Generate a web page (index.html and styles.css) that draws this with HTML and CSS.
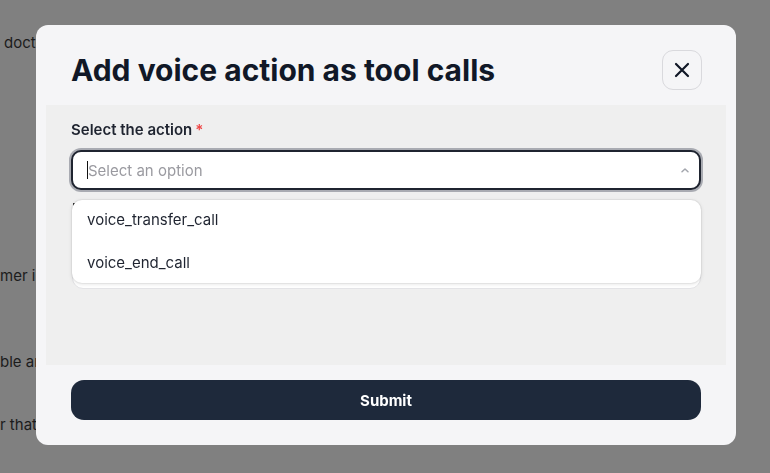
FILE: index.html
```html
<!DOCTYPE html>
<html>
<head>
<meta charset="utf-8">
<link rel="stylesheet" href="styles.css">
</head>
<body>
<div class="page">
  <p class="bg-line l1">doctor appointment</p>
  <p class="bg-line l2 cut">mer information</p>
  <p class="bg-line l3 cut">ble and more</p>
  <p class="bg-line l4 cut">r that is</p>
</div>
<div class="overlay">
  <div class="modal">
    <div class="modal-header">
      <h2 class="modal-title">Add voice action as tool calls</h2>
      <button class="close-btn" aria-label="Close">
        <svg width="20" height="20" viewBox="0 0 20 20"><path d="M4 4 L16 16 M16 4 L4 16" stroke="#111827" stroke-width="2.2" stroke-linecap="round"/></svg>
      </button>
    </div>
    <div class="modal-body">
      <label class="field-label">Select the action<span class="req">*</span></label>
      <div class="select-wrap">
        <div class="select">
          <span class="caret"></span><span class="placeholder">Select an option</span>
          <svg class="chev" width="10" height="6" viewBox="0 0 10 6"><path d="M2 4.8 L5 2 L8 4.8" fill="none" stroke="#a3a6ad" stroke-width="1.5" stroke-linecap="round" stroke-linejoin="round"/></svg>
        </div>
        <div class="next-field"><span class="next-mark"></span></div>
        <ul class="dropdown">
          <li class="option">voice_transfer_call</li>
          <li class="option">voice_end_call</li>
        </ul>
      </div>
    </div>
    <div class="modal-footer">
      <button class="submit-btn">Submit</button>
    </div>
  </div>
</div>
</body>
</html>
```

FILE: styles.css
```css
* { box-sizing: border-box; }
html, body { margin: 0; padding: 0; }
body {
  width: 770px;
  height: 473px;
  overflow: hidden;
  background: #808080;
  font-family: Inter, "Noto Sans", sans-serif;
}
.page {
  padding: 0 0 0 4px;
  color: #1c1c1c;
  font-size: 15px;
}
.bg-line { margin: 0; line-height: 20px; white-space: nowrap; }
.cut { margin-left: -4px; }
.l1 { padding-top: 33px; }
.l2 { margin-top: 213px; }
.l3 { margin-top: 66px; }
.l4 { margin-top: 43px; }
.overlay {
  position: fixed;
  inset: 0;
}
.modal {
  position: absolute;
  left: 36px;
  top: 25px;
  width: 700px;
  height: 420px;
  background: #f5f5f7;
  border-radius: 12px;
  display: flex;
  flex-direction: column;
}
.modal-header {
  height: 80px;
  padding: 25px 34px 15px 35px;
  display: flex;
  align-items: center;
  justify-content: space-between;
}
.modal-title {
  margin: 0;
  font-size: 30px;
  font-weight: 700;
  color: #111827;
}
.close-btn {
  width: 40px;
  height: 40px;
  border: 1px solid #d9d9dd;
  border-radius: 11px;
  background: #f5f5f7;
  display: flex;
  align-items: center;
  justify-content: center;
  padding: 0;
}
.modal-body {
  margin: 0 10px;
  height: 260px;
  background: #efefef;
  padding: 15px 25px 0 25px;
}
.field-label {
  display: block;
  font-size: 15px;
  font-weight: 600;
  color: #1f2430;
  line-height: 20px;
  margin-bottom: 10px;
}
.req { color: #ef4444; margin-left: 3px; }
.select-wrap { position: relative; }
.select {
  height: 40px;
  background: #fff;
  border: 2px solid #1f2430;
  border-radius: 10px;
  box-shadow: 0 0 0 2px #a9abb2;
  display: flex;
  align-items: center;
  padding: 0 9px 0 14px;
}
.caret {
  width: 1px;
  height: 18px;
  background: #111;
}
.placeholder {
  font-size: 15px;
  color: #9a9aa0;
  flex: 1;
}
.next-field {
  margin-top: 10px;
  margin-left: 1px;
  height: 89px;
  background: #fff;
  border: 1px solid #e3e3e6;
  border-radius: 11px;
  position: relative;
}
.next-mark {
  position: absolute;
  left: 0;
  top: 2px;
  width: 2px;
  height: 4px;
  background: #333;
}
.dropdown {
  position: absolute;
  left: 1px;
  right: 0;
  top: 50px;
  height: 83px;
  margin: 0;
  padding: 0;
  list-style: none;
  background: #fff;
  border-radius: 10px;
  box-shadow: 0 1px 4px rgba(0,0,0,0.12), 0 0 0 1px rgba(0,0,0,0.04);
}
.option {
  height: 40px;
  line-height: 40px;
  padding-left: 15px;
  font-size: 15px;
  color: #1f2430;
}
.option + .option { margin-top: 3px; }
.modal-footer {
  padding: 15px 35px 25px 35px;
}
.submit-btn {
  width: 100%;
  height: 40px;
  border: 0;
  border-radius: 13px;
  background: #1e293b;
  color: #fff;
  font-family: Inter, "Noto Sans", sans-serif;
  font-size: 15px;
  font-weight: 700;
}
```
